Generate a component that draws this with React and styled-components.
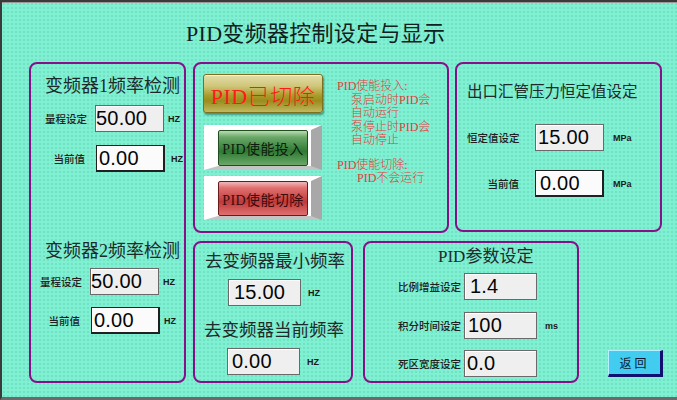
import React from "react";
import styled, { createGlobalStyle } from "styled-components";

const GlobalStyle = createGlobalStyle`
  html, body { margin: 0; padding: 0; background: #7ff0d2; }
  * { box-sizing: border-box; }
`;

const SERIF = `"Liberation Serif", "Noto Sans CJK SC", serif`;
const SANS = `"Noto Sans CJK SC", "Liberation Sans", sans-serif`;

const Screen = styled.div`
  width: 677px;
  height: 400px;
  background-color: #80f0d2;
  background-image: radial-gradient(rgba(40, 150, 130, 0.16) 0.8px, transparent 1px);
  background-size: 4px 4px;
  border-top: 2px solid #3a3a3a;
  border-left: 2px solid #3a3a3a;
  border-bottom: 3px solid #6a6a6a;
  box-shadow: inset 0 1px 0 #9a9a9a;
  font-family: ${SANS};
  color: #1a1a1a;
  overflow: hidden;
`;

const Title = styled.h1`
  margin: 0;
  padding: 19px 0 0 184px;
  height: 60px;
  font-family: ${SERIF};
  font-weight: normal;
  font-size: 22px;
  line-height: 26px;
  color: #102020;
  letter-spacing: 0.3px;
`;

const Body = styled.div`
  display: flex;
  gap: 7px;
  padding-left: 27px;
`;

const Stack = styled.div`
  display: flex;
  flex-direction: column;
  gap: 8px;
`;

const Row = styled.div`
  display: flex;
  gap: ${(p) => p.$gap || 6}px;
  align-items: ${(p) => p.$align || "flex-start"};
`;

const Panel = styled.div`
  width: ${(p) => p.$w}px;
  height: ${(p) => p.$h}px;
  border: 2px solid #86108a;
  border-radius: 8px;
  display: flex;
  flex-direction: ${(p) => p.$dir || "column"};
  padding: ${(p) => p.$pad || "0"};
`;

const PanelTitle = styled.div`
  font-family: ${SERIF};
  font-size: ${(p) => p.$size || 18}px;
  line-height: 22px;
  color: #1c2a2a;
  margin: ${(p) => p.$m || "0"};
  white-space: nowrap;
`;

const Field = styled.div`
  display: flex;
  align-items: center;
  margin: ${(p) => p.$m || "0"};
`;

const Label = styled.span`
  width: ${(p) => p.$w}px;
  text-align: right;
  font-size: 10.5px;
  font-weight: 500;
  color: #202020;
  margin-right: ${(p) => p.$gap ?? 10}px;
  white-space: nowrap;
`;

const ValueBox = styled.div`
  width: ${(p) => p.$w || 69}px;
  height: 27px;
  padding-left: ${(p) => p.$pad ?? 3}px;
  font-family: "Liberation Sans", Arial, sans-serif;
  font-size: 20px;
  line-height: 25px;
  color: #050505;
  letter-spacing: 0.2px;
  background: ${(p) => (p.$display ? "#fbfbfb" : "#efefef")};
  border: 1px solid ${(p) => (p.$display ? "#202020" : "#6a6a6a")};
  border-right-width: ${(p) => (p.$display ? 2 : 1)}px;
  border-bottom-width: ${(p) => (p.$display ? 2 : 1)}px;
  box-shadow: inset 1px 1px 0 #ffffff;
  white-space: nowrap;
`;

const Unit = styled.span`
  font-family: "Liberation Sans Narrow", "Liberation Sans", sans-serif;
  font-size: 9px;
  font-weight: bold;
  color: #1a1a1a;
  margin-left: ${(p) => p.$gap || 4}px;
`;

const Buttons = styled.div`
  display: flex;
  flex-direction: column;
  align-items: flex-start;
`;

const StatusLamp = styled.div`
  width: 120px;
  height: 39px;
  border: 1px solid #7a7020;
  border-radius: 3px;
  background: linear-gradient(
    to bottom,
    #e4deaa 0%,
    #cfc67a 30%,
    #aa9c2a 55%,
    #9a8c1c 70%,
    #c2b860 100%
  );
  box-shadow: 1px 2px 2px rgba(20, 90, 80, 0.6), inset 0 1px 0 #f4f0d0;
  display: flex;
  align-items: center;
  justify-content: center;
  font-family: ${SERIF};
  font-size: 22px;
  font-weight: 300;
  color: #ff1a1a;
  letter-spacing: 0.5px;
`;

const Bevel = styled.div`
  width: 118px;
  height: ${(p) => p.$h}px;
  margin: ${(p) => p.$m || "0"};
  background: #ffffff;
  border-top: 5px solid #ffffff;
  border-left: 14px solid #ffffff;
  border-right: 11px solid #a8a8a8;
  border-bottom: 4px solid #c4c4c4;
  display: flex;
`;

const PushButton = styled.div`
  flex: 1;
  border: 1px solid ${(p) => p.$edge};
  border-radius: 2px;
  margin-right: 3px;
  background: linear-gradient(
    to bottom,
    ${(p) => p.$light} 0%,
    ${(p) => p.$mid} 18%,
    ${(p) => p.$dark} 60%,
    ${(p) => p.$mid} 100%
  );
  display: flex;
  align-items: center;
  justify-content: center;
  font-family: ${SERIF};
  font-size: 14px;
  color: ${(p) => p.$text};
  letter-spacing: 0.4px;
`;

const Note = styled.div`
  margin: 6px 0 0 14px;
  font-family: ${SERIF};
  font-size: 12px;
  font-weight: 300;
  line-height: 13.5px;
  color: #e63a3a;
  white-space: nowrap;
`;

const NoteLine = styled.div`
  padding-left: ${(p) => p.$indent || 0}px;
  margin-top: ${(p) => p.$gap || 0}px;
`;

const ReturnButton = styled.div`
  width: 55px;
  height: 27px;
  margin: 0 0 6px 19px;
  align-self: flex-end;
  background: #42ccf0;
  border-top: 1px solid #b8f0ff;
  border-left: 1px solid #b8f0ff;
  border-right: 3px solid #101070;
  border-bottom: 3px solid #101070;
  display: flex;
  align-items: center;
  justify-content: center;
  font-family: ${SERIF};
  font-size: 12px;
  letter-spacing: 3px;
  color: #101830;
`;

export default function App() {
  return (
    <>
      <GlobalStyle />
      <Screen>
        <Title>PID变频器控制设定与显示</Title>
        <Body>
          <Panel $w={157} $h={321} $pad="11px 0 0 14px">
            <PanelTitle $m="0 0 8px 0">变频器1频率检测</PanelTitle>
            <Field>
              <Label $w={40}>量程设定</Label>
              <ValueBox $pad={0}>50.00</ValueBox>
              <Unit>HZ</Unit>
            </Field>
            <Field $m="13px 0 0 0">
              <Label $w={40} $gap={11}>当前值</Label>
              <ValueBox $display $pad={2}>0.00</ValueBox>
              <Unit $gap={6}>HZ</Unit>
            </Field>
            <PanelTitle $m="68px 0 6px 0">变频器2频率检测</PanelTitle>
            <Field $m="0 0 0 -5px">
              <Label $w={40}>量程设定</Label>
              <ValueBox $pad={0}>50.00</ValueBox>
              <Unit>HZ</Unit>
            </Field>
            <Field $m="12px 0 0 -5px">
              <Label $w={40} $gap={11}>当前值</Label>
              <ValueBox $display $pad={2}>0.00</ValueBox>
              <Unit>HZ</Unit>
            </Field>
          </Panel>

          <Stack>
            <Row $gap={6}>
              <Panel $w={256} $h={171} $dir="row" $pad="10px 0 0 8px">
                <Buttons>
                  <StatusLamp>PID已切除</StatusLamp>
                  <Bevel $h={45} $m="12px 0 0 1px">
                    <PushButton
                      $edge="#1f4f1f"
                      $light="#b8dcb0"
                      $mid="#6aa868"
                      $dark="#2f7a34"
                      $text="#0c1c0c"
                    >
                      PID使能投入
                    </PushButton>
                  </Bevel>
                  <Bevel $h={44} $m="6px 0 0 1px">
                    <PushButton
                      $edge="#6a1a1a"
                      $light="#f0b8b8"
                      $mid="#e07070"
                      $dark="#c03a3a"
                      $text="#3c0c0c"
                    >
                      PID使能切除
                    </PushButton>
                  </Bevel>
                </Buttons>
                <Note>
                  <NoteLine>PID使能投入:</NoteLine>
                  <NoteLine $indent={14}>泵启动时PID会</NoteLine>
                  <NoteLine $indent={14}>自动运行</NoteLine>
                  <NoteLine $indent={14}>泵停止时PID会</NoteLine>
                  <NoteLine $indent={14}>自动停止</NoteLine>
                  <NoteLine $gap={11}>PID使能切除:</NoteLine>
                  <NoteLine $indent={20}>PID不会运行</NoteLine>
                </Note>
              </Panel>

              <Panel $w={207} $h={170} $pad="17px 0 0 10px">
                <PanelTitle $size={15.5} $m="0 0 21px 0">出口汇管压力恒定值设定</PanelTitle>
                <Field>
                  <Label $w={52} $gap={16}>恒定值设定</Label>
                  <ValueBox $pad={2}>15.00</ValueBox>
                  <Unit $gap={9}>MPa</Unit>
                </Field>
                <Field $m="19px 0 0 0">
                  <Label $w={52} $gap={16}>当前值</Label>
                  <ValueBox $display $pad={4}>0.00</ValueBox>
                  <Unit $gap={9}>MPa</Unit>
                </Field>
              </Panel>
            </Row>

            <Row $gap={10}>
              <Panel $w={160} $h={142} $pad="7px 0 0 10px">
                <PanelTitle $size={17.5} $m="0 0 7px 0">去变频器最小频率</PanelTitle>
                <Field $m="0 0 0 23px">
                  <ValueBox $w={73} $pad={5}>15.00</ValueBox>
                  <Unit $gap={7}>HZ</Unit>
                </Field>
                <PanelTitle $size={17.5} $m="13px 0 7px -1px">去变频器当前频率</PanelTitle>
                <Field $m="0 0 0 22px">
                  <ValueBox $w={73} $pad={4}>0.00</ValueBox>
                  <Unit $gap={7}>HZ</Unit>
                </Field>
              </Panel>

              <Panel $w={216} $h={142} $pad="3px 0 0 32px">
                <PanelTitle $size={17} $m="0 0 5px 41px">PID参数设定</PanelTitle>
                <Field>
                  <Label $w={64} $gap={3}>比例增益设定</Label>
                  <ValueBox $w={73} $pad={5}>1.4</ValueBox>
                </Field>
                <Field $m="12px 0 0 0">
                  <Label $w={64} $gap={3}>积分时间设定</Label>
                  <ValueBox $w={73} $pad={3}>100</ValueBox>
                  <Unit $gap={8}>ms</Unit>
                </Field>
                <Field $m="11px 0 0 0">
                  <Label $w={64} $gap={3}>死区宽度设定</Label>
                  <ValueBox $w={73} $pad={2}>0.0</ValueBox>
                </Field>
              </Panel>

              <ReturnButton>返回</ReturnButton>
            </Row>
          </Stack>
        </Body>
      </Screen>
    </>
  );
}
